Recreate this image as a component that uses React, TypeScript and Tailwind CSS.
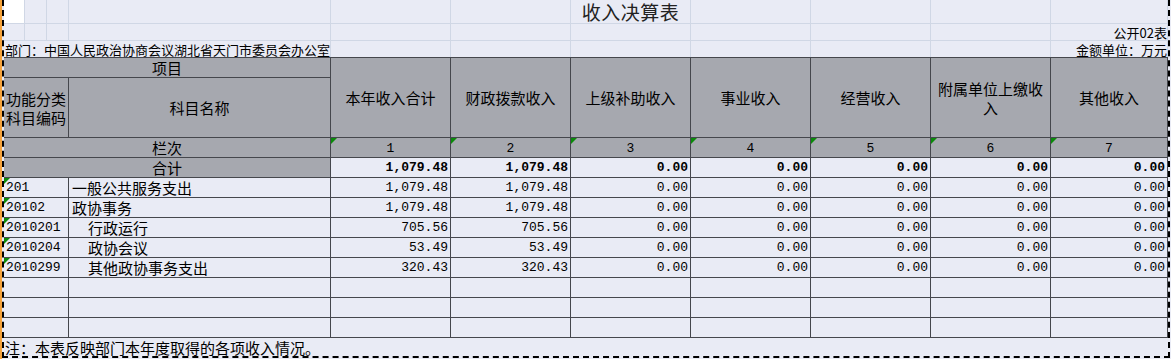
import React from 'react'

// Excel-like sheet colours
const dark = 'border-[#45474d]'
const light = 'border-[#d0d7e5]'
const cjk = "font-['Noto_Sans_CJK_SC','Noto_Sans',sans-serif]"
const mono = "font-['Liberation_Mono',monospace]"

const headers = ['本年收入合计', '财政拨款收入', '上级补助收入', '事业收入', '经营收入', '附属单位上缴收入', '其他收入']

const zeros = ['0.00', '0.00', '0.00', '0.00', '0.00']

const rows = [
  { code: '201', name: '一般公共服务支出', indent: false, vals: ['1,079.48', '1,079.48', ...zeros] },
  { code: '20102', name: '政协事务', indent: false, vals: ['1,079.48', '1,079.48', ...zeros] },
  { code: '2010201', name: '行政运行', indent: true, vals: ['705.56', '705.56', ...zeros] },
  { code: '2010204', name: '政协会议', indent: true, vals: ['53.49', '53.49', ...zeros] },
  { code: '2010299', name: '其他政协事务支出', indent: true, vals: ['320.43', '320.43', ...zeros] },
]

const GreenMark = () => (
  <svg className="absolute left-0 top-0" width="6" height="6" viewBox="0 0 6 6">
    <polygon points="0,0 6,0 0,6" fill="#0a8a0a" />
  </svg>
)

const App = () => {
  return (
    <div className={`w-[1171px] h-[359px] bg-[#e9ebf5] flex overflow-hidden text-black ${cjk}`}>
      {/* orange column edge */}
      <div className="w-[2px] h-full bg-[#f5a33c] shrink-0" />

      {/* copy selection (marching ants) */}
      <div className="w-[1168px] h-[358px] border-l-2 border-r-2 border-b-2 border-dashed border-black flex flex-col">
        {/* sheet rows above the table */}
        <div className="grid grid-cols-[21px_22px_22px_262px_repeat(6,120px)_117px] grid-rows-[24px_17px_16px]">
          {/* row 1 */}
          <div className={`bg-white border-r border-b ${light}`} />
          <div className={`border-r border-b ${light}`} />
          <div className={`border-r border-b ${light}`} />
          <div className={`border-r border-b ${light}`} />
          <div className={`border-r border-b ${light}`} />
          <div className={`border-r border-b ${light}`} />
          <div className={`border-r border-b ${light} flex items-center justify-center`}>
            <span className="text-[19px] leading-[23px] whitespace-nowrap text-[#222] tracking-[0.5px]">收入决算表</span>
          </div>
          <div className={`border-r border-b ${light}`} />
          <div className={`border-r border-b ${light}`} />
          <div className={`border-r border-b ${light}`} />
          <div className={`border-r border-b ${light}`} />

          {/* row 2 */}
          {Array.from({ length: 10 }).map((_, i) => (
            <div key={i} className={`border-r border-b ${light}`} />
          ))}
          <div className={`border-r border-b ${light} flex items-center justify-end`}>
            <span className="text-[13px] leading-none whitespace-nowrap">公开02表</span>
          </div>

          {/* row 3 */}
          <div className={`col-span-4 border-r ${light} flex items-center pl-[1px]`}>
            <span className="text-[13px] leading-none whitespace-nowrap">部门：中国人民政治协商会议湖北省天门市委员会办公室</span>
          </div>
          {Array.from({ length: 6 }).map((_, i) => (
            <div key={i} className={`border-r ${light}`} />
          ))}
          <div className={`border-r ${light} flex items-center justify-end`}>
            <span className="text-[13px] leading-none whitespace-nowrap">金额单位：万元</span>
          </div>
        </div>

        {/* the table */}
        <div className={`grid grid-cols-[65px_262px_repeat(6,120px)_117px] grid-rows-[20px_60px_repeat(10,20px)_18px] border-t ${dark}`}>
          {/* header */}
          <div className={`col-span-2 bg-[#a6a8af] border-r border-b ${dark} flex items-center justify-center text-[15px] leading-none`}>
            项目
          </div>
          {headers.map((h) => (
            <div
              key={h}
              className={`row-span-2 bg-[#a6a8af] border-r border-b ${dark} flex items-center justify-center text-center text-[15px] leading-[19px]`}
            >
              {h === '附属单位上缴收入' ? (
                <span>
                  附属单位上缴收
                  <br />入
                </span>
              ) : (
                h
              )}
            </div>
          ))}
          <div className={`bg-[#a6a8af] border-r border-b ${dark} flex items-center justify-center text-[15px] leading-[19px] text-center`}>
            <span>
              功能分类
              <br />
              科目编码
            </span>
          </div>
          <div className={`bg-[#a6a8af] border-r border-b ${dark} flex items-center justify-center text-[15px] leading-none`}>
            科目名称
          </div>

          {/* 栏次 */}
          <div className={`col-span-2 bg-[#a6a8af] border-r border-b ${dark} flex items-center justify-center text-[15px] leading-none`}>
            栏次
          </div>
          {[1, 2, 3, 4, 5, 6, 7].map((n) => (
            <div
              key={n}
              className={`relative bg-[#a6a8af] border-r border-b ${dark} flex items-end justify-center pb-[2px] text-[13px] leading-none ${mono}`}
            >
              <GreenMark />
              {n}
            </div>
          ))}

          {/* 合计 */}
          <div className={`col-span-2 bg-[#a6a8af] border-r border-b ${dark} flex items-center justify-center text-[15px] leading-none`}>
            合计
          </div>
          {['1,079.48', '1,079.48', ...zeros].map((v, i) => (
            <div
              key={i}
              className={`border-r border-b ${dark} flex items-center justify-end pr-[2px] text-[13px] font-bold leading-none ${mono}`}
            >
              {v}
            </div>
          ))}

          {/* data rows */}
          {rows.map((r) => (
            <React.Fragment key={r.code}>
              <div className={`relative border-r border-b ${dark} flex items-center pl-[2px] text-[13px] leading-none ${mono}`}>
                <GreenMark />
                {r.code}
              </div>
              <div
                className={`border-r border-b ${dark} flex items-center text-[15px] leading-none whitespace-nowrap ${
                  r.indent ? 'pl-[19px]' : 'pl-[3px]'
                }`}
              >
                {r.name}
              </div>
              {r.vals.map((v, i) => (
                <div
                  key={i}
                  className={`border-r border-b ${dark} flex items-center justify-end pr-[2px] text-[13px] leading-none ${mono}`}
                >
                  {v}
                </div>
              ))}
            </React.Fragment>
          ))}

          {/* empty rows */}
          {Array.from({ length: 27 }).map((_, i) => (
            <div key={i} className={`border-r border-b ${dark}`} />
          ))}

          {/* note */}
          <div className="col-span-9 flex items-center pl-[1px] text-[15px] leading-none whitespace-nowrap">
            注：本表反映部门本年度取得的各项收入情况。
          </div>
        </div>
      </div>
    </div>
  )
}

export default App
